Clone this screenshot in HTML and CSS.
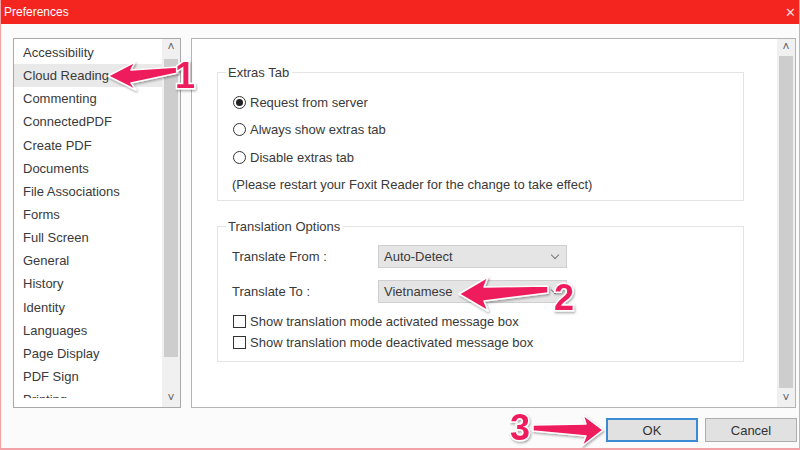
FILE: index.html
```html
<!DOCTYPE html>
<html lang="en">
<head>
    <meta charset="UTF-8">
    <title>Preferences</title>
    <link rel="stylesheet" href="styles.css">
</head>
<body>
    <div class="window">
        <div class="titlebar">
            <span class="title">Preferences</span>
            <span class="close">&#x2715;</span>
        </div>

        <div class="panes">
            <div class="category-list">
                <ul class="items">
                    <li>Accessibility</li>
                    <li class="selected">Cloud Reading</li>
                    <li>Commenting</li>
                    <li>ConnectedPDF</li>
                    <li>Create PDF</li>
                    <li>Documents</li>
                    <li>File Associations</li>
                    <li>Forms</li>
                    <li>Full Screen</li>
                    <li>General</li>
                    <li>History</li>
                    <li>Identity</li>
                    <li>Languages</li>
                    <li>Page Display</li>
                    <li>PDF Sign</li>
                    <li>Printing</li>
                </ul>
                <div class="scrollbar">
                    <span class="arrow">&#x2C4;</span>
                    <div class="track"><div class="thumb list-thumb"></div></div>
                    <span class="arrow">&#x2C5;</span>
                </div>
            </div>

            <div class="settings">
                <div class="settings-body">
                    <fieldset class="group extras">
                        <legend>Extras Tab</legend>
                        <div class="option"><span class="radio checked"></span>Request from server</div>
                        <div class="option"><span class="radio"></span>Always show extras tab</div>
                        <div class="option"><span class="radio"></span>Disable extras tab</div>
                        <div class="note">(Please restart your Foxit Reader for the change to take effect)</div>
                    </fieldset>

                    <fieldset class="group translation">
                        <legend>Translation Options</legend>
                        <div class="field from">
                            <label>Translate From :</label>
                            <div class="select">Auto-Detect<span class="chevron"></span></div>
                        </div>
                        <div class="field to">
                            <label>Translate To :</label>
                            <div class="select">Vietnamese<span class="chevron"></span></div>
                        </div>
                        <div class="check-row"><span class="checkbox"></span>Show translation mode activated message box</div>
                        <div class="check-row"><span class="checkbox"></span>Show translation mode deactivated message box</div>
                    </fieldset>
                </div>
                <div class="scrollbar">
                    <span class="arrow">&#x2C4;</span>
                    <div class="track"><div class="thumb settings-thumb"></div></div>
                    <span class="arrow">&#x2C5;</span>
                </div>
            </div>
        </div>

        <div class="footer">
            <button class="btn primary">OK</button>
            <button class="btn">Cancel</button>
        </div>

        <!-- tutorial annotations drawn over the dialog -->
        <svg class="annotations" width="800" height="450" viewBox="0 0 800 450">
            <defs>
                <filter id="shade" x="-20%" y="-40%" width="140%" height="180%">
                    <feDropShadow dx="1" dy="1.5" stdDeviation="1" flood-color="#000" flood-opacity="0.35"/>
                </filter>
            </defs>
            <g class="arrow-shape" filter="url(#shade)">
                <polygon points="108,76 135,62 131,70 177,67 178,73 131,83 136,90"/>
                <polygon points="459,294 488,277 484,287 548,286 548,293 484,301 488,311"/>
                <polygon points="603,430 583,415 586,424 533,425 533,431 586,436 582,446"/>
            </g>
            <g class="step-number" filter="url(#shade)">
                <text x="175" y="88">1</text>
                <text x="554" y="310">2</text>
                <text x="510" y="440">3</text>
            </g>
        </svg>
    </div>
</body>
</html>
```

FILE: styles.css
```css
* {
    box-sizing: border-box;
    margin: 0;
    padding: 0;
}

body {
    font-family: "Liberation Sans", Arial, sans-serif;
    font-size: 13px;
    color: #3a3a3a;
    background-color: #fbfbfb;
}

.window {
    position: relative;
    width: 800px;
    height: 450px;
    background-color: #fbfbfb;
    border-left: 1px solid #f2a0a0;
    border-right: 1px solid #f2a0a0;
    border-bottom: 2px solid #f3a3a8;
    overflow: hidden;
}

.titlebar {
    height: 24px;
    background-color: #f4241f;
    color: #fff;
    display: flex;
    align-items: center;
    justify-content: space-between;
    padding: 0 3px 0 3px;
    font-size: 12px;
}

.close {
    font-size: 13px;
    color: #ffd9d9;
}

.panes {
    display: flex;
    gap: 10px;
    padding: 14px 3px 0 12px;
    height: 384px;
}

/* left category list */
.category-list {
    width: 168px;
    height: 370px;
    border: 1px solid #a9a9a9;
    background-color: #fff;
    display: flex;
    align-items: flex-start;
}

.items {
    flex: 1;
    height: 359px;
    list-style: none;
    padding-top: 2px;
    overflow: hidden;
}

.items li {
    height: 23.15px;
    line-height: 23px;
    padding-left: 9px;
    white-space: nowrap;
}

.items li.selected {
    background-color: #e9e9e9;
}

.scrollbar {
    width: 18px;
    height: 100%;
    background-color: #f0f0f0;
    display: flex;
    flex-direction: column;
    align-items: center;
}

.scrollbar .arrow {
    height: 17px;
    line-height: 17px;
    font-size: 12px;
    color: #606060;
}

.track {
    flex: 1;
    width: 100%;
    padding: 0 2px;
}

.thumb {
    background-color: #cdcdcd;
}

.list-thumb {
    height: 298px;
    margin-top: 3px;
}

.settings-thumb {
    height: 332px;
    margin-top: 0;
}

/* right settings panel */
.settings {
    flex: 1;
    height: 370px;
    border: 1px solid #b4b4b4;
    background-color: #fff;
    display: flex;
}

.settings-body {
    flex: 1;
    padding: 26px 33px 0 25px;
}

.group {
    border: 1px solid #e4e4e4;
    padding: 0 0 0 14px;
}

.group legend {
    margin-left: -6px;
    padding: 0 3px 0 2px;
}

.extras {
    height: 136px;
    padding-top: 9px;
}

.option {
    display: flex;
    align-items: center;
    height: 27.3px;
    padding-left: 1px;
}

.note {
    height: 27px;
    line-height: 27px;
}

.radio {
    width: 13px;
    height: 13px;
    border: 1px solid #333;
    border-radius: 50%;
    margin-right: 4px;
    display: flex;
    align-items: center;
    justify-content: center;
}

.radio.checked::after {
    content: "";
    width: 7px;
    height: 7px;
    border-radius: 50%;
    background-color: #222;
}

.translation {
    margin-top: 18px;
    height: 143px;
    padding-top: 11px;
}

.field {
    display: flex;
    align-items: center;
}

.field label {
    width: 146px;
}

.field.to {
    margin-top: 12px;
}

.select {
    width: 189px;
    height: 23px;
    background-color: #e5e5e5;
    border: 1px solid #cfcfcf;
    display: flex;
    align-items: center;
    justify-content: space-between;
    padding: 0 8px 0 5px;
}

.chevron {
    width: 6px;
    height: 6px;
    border-right: 1px solid #777;
    border-bottom: 1px solid #777;
    transform: rotate(45deg);
    margin-top: -4px;
}

.check-row {
    display: flex;
    align-items: center;
    height: 21px;
    padding-left: 1px;
}

.field.to + .check-row {
    margin-top: 8px;
}

.checkbox {
    width: 13px;
    height: 13px;
    border: 1px solid #333;
    margin-right: 4px;
}

/* dialog buttons */
.footer {
    display: flex;
    justify-content: flex-end;
    gap: 7px;
    padding: 10px 2px 0 0;
}

.btn {
    width: 92px;
    height: 24px;
    background-color: #e1e1e1;
    border: 1px solid #adadad;
    font-family: "Liberation Sans", Arial, sans-serif;
    font-size: 13px;
    color: #333;
}

.btn.primary {
    border: 2px solid #3a8ad4;
}

.annotations {
    position: absolute;
    left: -1px;
    top: 0;
    pointer-events: none;
}

.arrow-shape polygon {
    fill: #ee1c5c;
    stroke: #fff;
    stroke-width: 1.5;
    stroke-linejoin: round;
}

.step-number text {
    font-family: "Liberation Sans", Arial, sans-serif;
    font-weight: bold;
    font-size: 36px;
    fill: #ee1c5c;
    stroke: #fff;
    stroke-width: 3;
    paint-order: stroke;
}
```
